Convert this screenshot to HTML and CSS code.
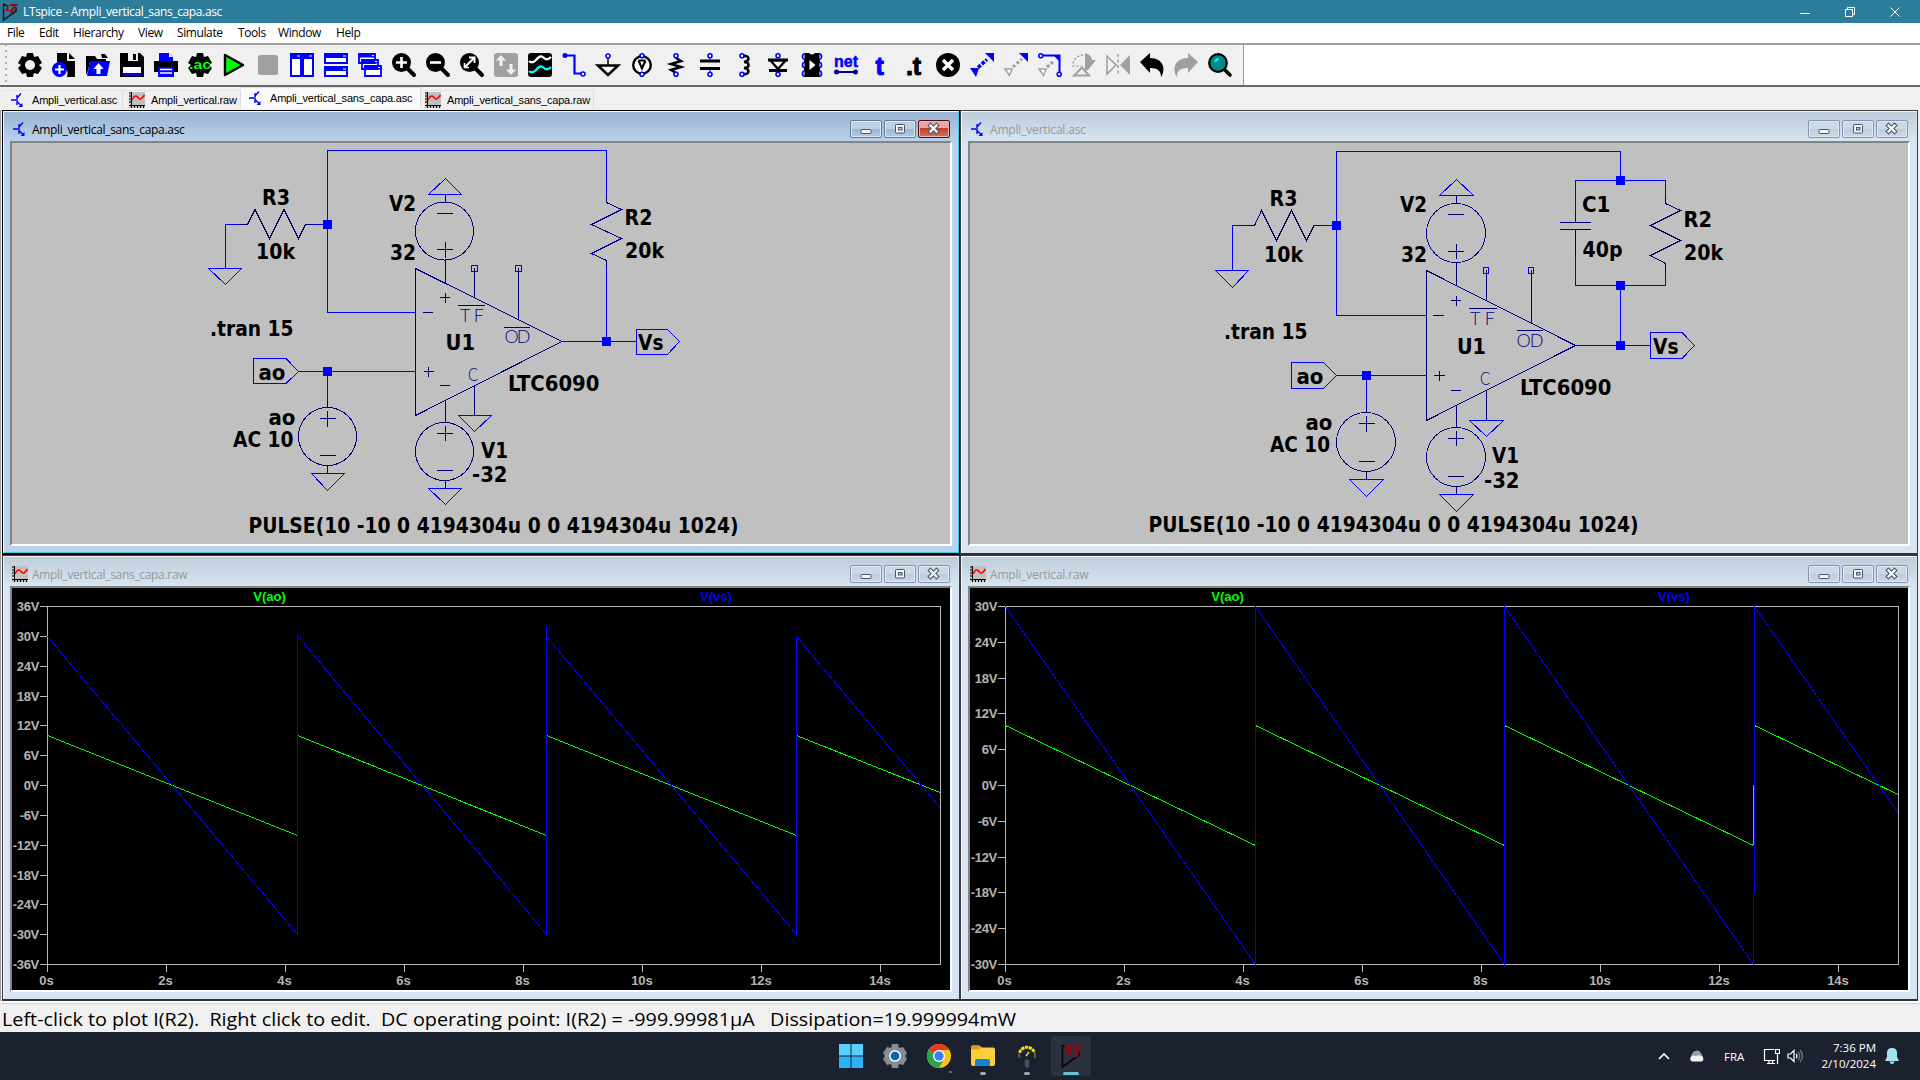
FILE: index.html
```html
<!DOCTYPE html>
<html lang="en">
<head>
<meta charset="utf-8">
<title>LTspice - Ampli_vertical_sans_capa.asc</title>
<link rel="stylesheet" href="styles.css">
</head>
<body>
<svg class="defs" width="0" height="0">
  <defs>
    <symbol id="i-sch" viewBox="0 0 16 16"><path d="M1 8h5M7 3v10M7 6l4-4.500M7 9.500l4 4" fill="none" stroke="#00f" stroke-width="1.400"/><path d="M8.500 15h4v-4z" fill="#00f"/></symbol>
    <symbol id="i-raw" viewBox="0 0 16 16"><path fill="#c0c0c0" d="M0 0h16v16H0z"/><path d="M2.500 0v16M0 13.500h16M0 1h2M0 4h2M0 7h2M0 10h2M5.500 13v3M8.500 13v3M11.500 13v3M14.500 13v3" stroke="#000" fill="none"/><path d="M3 8C6 2 8 4 9.500 6S13 7 15.500 3" stroke="#f00" stroke-width="1.600" fill="none"/></symbol>
    <symbol id="i-lt" viewBox="0 0 16 20"><path d="M1.500 2v16L14 9V5M1.500 2l4 2" fill="none" stroke="#14161c" stroke-width="1.500"/><path d="M3 3h4L6 8h3l3-5h2l-3.500 8H8l1-2H3.500L5 5z" fill="#8b0a14"/><path d="M8 2h8l-1 2H8z" fill="#8b0a14"/></symbol>
    <symbol id="c-min" viewBox="0 0 30 16"><rect x="10" y="8.500" width="10" height="4" rx=".8" fill="#f4f4f4" stroke="#4b5468"/></symbol>
    <symbol id="c-max" viewBox="0 0 30 16"><rect x="10.500" y="3.500" width="9" height="8.500" rx=".8" fill="#f4f4f4" stroke="#4b5468"/><rect x="13.500" y="6.500" width="3.500" height="2.500" fill="#b9c9dd" stroke="#4b5468"/></symbol>
    <symbol id="c-x" viewBox="0 0 30 16"><path d="M11.500 4.500l6 6m0-6l-6 6" stroke="#4b5468" stroke-width="4.500" stroke-linecap="square"/><path d="M11.500 4.500l6 6m0-6l-6 6" stroke="#f6f6f6" stroke-width="2.400" stroke-linecap="square"/></symbol>
  </defs>
</svg>

<header class="titlebar">
  <svg class="app-icon" width="16" height="20"><use href="#i-lt"/></svg>
  <span class="app-title">LTspice - Ampli_vertical_sans_capa.asc</span>
  <div class="sys">
    <svg width="12" height="12" viewBox="0 0 12 12"><path d="M1 7.500h10" stroke="#fff"/></svg>
    <svg width="12" height="12" viewBox="0 0 12 12"><path d="M1.500 3.500h7v7h-7zM3.500 3.500v-2h7v7h-2" fill="none" stroke="#fff"/></svg>
    <svg width="12" height="12" viewBox="0 0 12 12"><path d="M1.500 1.500l9 9m0-9l-9 9" stroke="#fff"/></svg>
  </div>
</header>

<nav class="menu"><span>File</span><span>Edit</span><span>Hierarchy</span><span>View</span><span>Simulate</span><span>Tools</span><span>Window</span><span>Help</span></nav>

<div class="toolrow">
  <div class="toolbar">
    <svg viewBox="0 0 24 24"><path fill-rule="evenodd" d="M9 0h6l1 4 4-1 4 7-3 2 3 3-4 6-4-1-1 4H9l-1-4-4 1-4-6 3-3-3-2 4-7 4 1zM12 7a5 5 0 1 0 .01 0z"/></svg>
    <svg viewBox="0 0 24 24"><path d="M5 0h10v8h8v16H15q3-11-10-15z"/><path d="M17 0l6 6h-6z"/><circle cx="7.500" cy="16.500" r="7.500" fill="#00f"/><path d="M7.500 12v9M3 16.500h9" stroke="#fff" stroke-width="2.200"/></svg>
    <svg viewBox="0 0 24 24"><path d="M0 3h9l2 3h9v3H4L1 21H0zM15 1h4l3 4h-6z"/><path d="M4 8h20l-3 15H1z" fill="#00f"/><path d="M12.500 10l5 6h-3v5h-4v-5h-3z" fill="#fff"/></svg>
    <svg viewBox="0 0 24 24"><path d="M0 0h20l4 4v20H0z"/><path d="M5 0h13v8H5z" fill="#f0f0f0"/><path d="M13 1h3v6h-3zM5 0h3v8H5z"/><path d="M3 14h18v6H3z" fill="#fff"/><path d="M3 20h18v3H3z" fill="#00f"/></svg>
    <svg viewBox="0 0 24 24"><path d="M5 0h10l4 4v4H5z" fill="#00f"/><path d="M15 0v4h4" fill="#fff"/><path d="M0 8h24v11h-4v-5H4v5H0z"/><path d="M4 14h16v10H4z" fill="#00f"/><path d="M6 16.500h12M6 20h12" stroke="#fff" stroke-width="1.600"/></svg>
    <svg viewBox="0 0 24 24"><path d="M9 0h6l1 4 4-1 4 7-3 2 3 3-4 6-4-1-1 4H9l-1-4-4 1-4-6 3-3-3-2 4-7 4 1z"/><text x="1" y="16" class="t-ac" textLength="22" lengthAdjust="spacingAndGlyphs">.ac</text></svg>
    <svg viewBox="0 0 24 24"><path d="M3 2l18 10L3 22z" fill="#0f0" stroke="#000" stroke-width="2.400" stroke-linejoin="round"/></svg>
    <svg viewBox="0 0 24 24"><rect x="2" y="2" width="20" height="20" rx="2.500" fill="#a0a0a0"/></svg>
    <svg viewBox="0 0 24 24"><path d="M1 1h10v22H1zM13 1h10v22H13zM1 5h10M13 5h10" fill="#fff" stroke="#00f" stroke-width="2"/><path d="M0 1h12v4H0zM12 1h12v4H12z" fill="#00f"/><path d="M7 3h3M19 3h3" stroke="#fff"/></svg>
    <svg viewBox="0 0 24 24"><path d="M1 1h22v9H1zM1 14h22v9H1z" fill="#fff" stroke="#00f" stroke-width="2"/><path d="M0 1h24v4H0zM0 14h24v4H0z" fill="#00f"/><path d="M19 3h3M19 16h3" stroke="#fff"/></svg>
    <svg viewBox="0 0 24 24"><g fill="#fff" stroke="#00f" stroke-width="1.800"><path d="M1 1h16v9H1zM4 7h16v9H4zM7 13h16v10H7z"/></g><path d="M0 1h18v3.500H0zM3 7h18v3.500H3zM6 13h18v3.500H6z" fill="#00f"/><path d="M14 2.500h2M17 8.500h2M20 14.500h2" stroke="#fff"/></svg>
    <svg viewBox="0 0 24 24"><path d="M15 15l7 7" stroke="#000" stroke-width="4" stroke-linecap="round"/><circle cx="9.500" cy="9.500" r="9.500"/><path d="M9.500 4v11M4 9.500h11" stroke="#fff" stroke-width="2.600"/></svg>
    <svg viewBox="0 0 24 24"><path d="M15 15l7 7" stroke="#000" stroke-width="4" stroke-linecap="round"/><circle cx="9.500" cy="9.500" r="9.500"/><path d="M4 9.500h11" stroke="#fff" stroke-width="2.600"/></svg>
    <svg viewBox="0 0 24 24"><path d="M15 15l7 7" stroke="#000" stroke-width="4" stroke-linecap="round"/><circle cx="9.500" cy="9.500" r="9.500"/><path d="M5 14l9-9M9 4.500h5.500V10" stroke="#fff" stroke-width="2" fill="none"/><path d="M4.500 10v4.500H9" stroke="#fff" stroke-width="1.600" fill="none"/></svg>
    <svg viewBox="0 0 24 24"><rect width="24" height="24" rx="3" fill="#a0a0a0"/><path d="M7 2l5 5.500H8.500V13h-3V7.500H2zM17 22l5-5.500h-3.500V11h-3v5.500H12z" fill="#f0f0f0"/></svg>
    <svg viewBox="0 0 24 24"><rect width="24" height="24" rx="3"/><path d="M1 8q3 3 7-1c4-5 6-4 8-2s4 2 7-1" fill="none" stroke="#fff" stroke-width="2.300"/><path d="M1 18q3 3 7-1c4-5 6-4 8-2s4 2 7-1" fill="none" stroke="#0ff" stroke-width="2.300"/></svg>
    <svg viewBox="0 0 24 24"><path d="M3 2.500h9.500v18H20" fill="none" stroke="#00f" stroke-width="2.200"/><circle cx="3" cy="2.500" r="2.500" fill="#00f"/><circle cx="21" cy="21" r="2" fill="#fff" stroke="#00f" stroke-width="1.600"/></svg>
    <svg viewBox="0 0 24 24"><path d="M12 5v7" stroke="#000" stroke-width="1.500"/><path d="M2 12.500h20L12 22z" fill="#fff" stroke="#000" stroke-width="2.600"/><circle cx="12" cy="3" r="2" fill="#fff" stroke="#00f" stroke-width="1.600"/></svg>
    <svg viewBox="0 0 24 24"><circle cx="12" cy="12" r="8.800" fill="#fff" stroke="#000" stroke-width="2.400"/><path d="M8.500 7.500l3.500 8 3.500-8M8.500 7.500h7" fill="none" stroke="#000" stroke-width="2.100"/><g fill="#fff" stroke="#00f" stroke-width="1.600"><circle cx="12" cy="2.800" r="2"/><circle cx="12" cy="21.200" r="2"/></g></svg>
    <svg viewBox="0 0 24 24"><path d="M12 5l5 3-10 3 10 3-10 3 5 3" fill="none" stroke="#000" stroke-width="2.500"/><g fill="#fff" stroke="#00f" stroke-width="1.600"><circle cx="12" cy="2.800" r="2"/><circle cx="12" cy="21.200" r="2"/></g></svg>
    <svg viewBox="0 0 24 24"><path d="M2 8h20M2 15.500h20" stroke="#000" stroke-width="3"/><path d="M12 4v3M12 17v3" stroke="#00f"/><g fill="#fff" stroke="#00f" stroke-width="1.600"><circle cx="12" cy="2.800" r="2"/><circle cx="12" cy="21.200" r="2"/></g></svg>
    <svg viewBox="0 0 24 24"><path d="M11 3c7-1 7 5 1 6 6 0 6 6 0 6 6 1 6 7-1 6" fill="none" stroke="#000" stroke-width="2.600"/><g fill="#fff" stroke="#00f" stroke-width="1.600"><circle cx="10" cy="2.800" r="2"/><circle cx="10" cy="21.200" r="2"/></g></svg>
    <svg viewBox="0 0 24 24"><path d="M2 7h20M3 17.500h18" stroke="#000" stroke-width="2.800"/><path d="M4.500 7.500h15L12 16z" fill="#fff" stroke="#000" stroke-width="2.400"/><g fill="#fff" stroke="#00f" stroke-width="1.600"><circle cx="12" cy="2.800" r="2"/><circle cx="12" cy="21.200" r="2"/></g></svg>
    <svg viewBox="0 0 24 24"><path d="M4 0h5q3 3 6 0h5v24H4z"/><path d="M9.500 7l6 5-6 5z" fill="#fff"/><g fill="#fff" stroke="#00f" stroke-width="1.700"><path d="M4.500 1a2 2.500 0 0 0 0 5M4.500 9.500a2 2.500 0 0 0 0 5M4.500 18a2 2.500 0 0 0 0 5M19.500 1a2 2.500 0 0 1 0 5M19.500 9.500a2 2.500 0 0 1 0 5M19.500 18a2 2.500 0 0 1 0 5"/></g></svg>
    <svg viewBox="0 0 24 24"><text x="0" y="13.500" class="t-net" textLength="24" lengthAdjust="spacingAndGlyphs">net</text><path d="M2 19h20" stroke="#000090" stroke-width="2"/><circle cx="2.500" cy="19" r="2.500" fill="#000090"/><circle cx="21.500" cy="19" r="2.500" fill="#000090"/></svg>
    <svg viewBox="0 0 24 24"><text x="7.500" y="22" class="t-t blue">t</text></svg>
    <svg viewBox="0 0 24 24"><text x="4" y="22" class="t-t" textLength="15">.t</text></svg>
    <svg viewBox="0 0 24 24"><circle cx="12" cy="12" r="12"/><path d="M7 7l10 10M17 7L7 17" stroke="#fff" stroke-width="3.400"/></svg>
    <svg viewBox="0 0 24 24"><path d="M15 0h9v9zM0 15h9l-3 9z" fill="#00f"/><path d="M8 14.500l9-8" stroke="#00f" stroke-width="3.600" stroke-dasharray="3.600 1.500"/></svg>
    <svg viewBox="0 0 24 24"><path d="M15 0h9v9z" fill="#00f"/><path d="M1 16h7l-2.500 6.500z" fill="#fff" stroke="#a0a0a0" stroke-width="1.500"/><path d="M9 14l9-8" stroke="#a0a0a0" stroke-width="3" stroke-dasharray="3 2"/></svg>
    <svg viewBox="0 0 24 24"><path d="M3 2.500h18.500V20" fill="none" stroke="#00f" stroke-width="2"/><path d="M15 2h7v7z" fill="#00f"/><g fill="#fff" stroke="#00f" stroke-width="1.600"><circle cx="2.800" cy="2.800" r="2"/><circle cx="21.200" cy="21.200" r="2"/></g><path d="M1 16h7l-2.500 6.500z" fill="#fff" stroke="#a0a0a0" stroke-width="1.500"/><path d="M9 14l7-6" stroke="#a0a0a0" stroke-width="3" stroke-dasharray="3 2"/></svg>
    <svg viewBox="0 0 24 24"><path d="M13 0c4 1 7 4 7 7h4l-8 10h-3z" fill="#a0a0a0"/><path d="M11 2Q1 3 1 13h8" fill="none" stroke="#a0a0a0" stroke-width="1.500" stroke-dasharray="2 2"/><path d="M2 22.500l8-8 7 8z" fill="#f0f0f0" stroke="#a0a0a0" stroke-width="2"/></svg>
    <svg viewBox="0 0 24 24"><path d="M1 3l9 9-9 9z" fill="#f0f0f0" stroke="#a0a0a0" stroke-width="1.600"/><path d="M24 2v20l-10-10z" fill="#a0a0a0"/><path d="M12 1v22" stroke="#a0a0a0" stroke-width="1.500" stroke-dasharray="3 2.500"/></svg>
    <svg viewBox="0 0 24 24"><path d="M0 9l10-9v5c14 0 16 12 11 19 0-6-3-9-11-9v5z"/></svg>
    <svg viewBox="0 0 24 24"><path d="M24 9L14 0v5C0 5-2 17 3 24c0-6 3-9 11-9v5z" fill="#a0a0a0"/></svg>
    <svg viewBox="0 0 24 24"><path d="M15 15l7 7" stroke="#000" stroke-width="3.600" stroke-linecap="round"/><circle cx="10" cy="10" r="8.800" fill="#008a8a" stroke="#000" stroke-width="2.200"/><path d="M6 9q1-4 5-4-1 4-5 4z" fill="#0ff"/></svg>
  </div>
</div>

<div class="tabs">
  <div class="tab"><svg width="16" height="16"><use href="#i-sch"/></svg><span>Ampli_vertical.asc</span></div>
  <div class="tab second"><svg width="16" height="16"><use href="#i-raw"/></svg><span>Ampli_vertical.raw</span></div>
  <div class="tab active"><svg width="16" height="16"><use href="#i-sch"/></svg><span>Ampli_vertical_sans_capa.asc</span></div>
  <div class="tab fourth"><svg width="16" height="16"><use href="#i-raw"/></svg><span>Ampli_vertical_sans_capa.raw</span></div>
</div>

<main class="mdi">
  <section class="win current">
    <div class="cap"><svg width="16" height="16"><use href="#i-sch"/></svg><span class="long">Ampli_vertical_sans_capa.asc</span>
      <div class="btns"><svg><use href="#c-min"/></svg><svg><use href="#c-max"/></svg><svg class="close"><use href="#c-x"/></svg></div></div>
    <svg class="client sch" viewBox="12 143 938 401" width="938" height="401">
      <g class="wire">
        <path d="M327.500 312.500V150.500H606.500V195M327.500 312.500H415.500M323 224.500H313M240 224.500H225.500V268.500M208.500 268.500H241.500L225.500 284.500ZM606.500 268V341.500M562 341.500H636.500M636.500 329.500H667.500L679.500 341.500L667.500 354.500H636.500ZM253.500 358.500H286L298.500 371.500L286 383.500H253.500ZM298.500 371.500H415.500M327.500 371V400"/>
        <path d="M445.500 178.500L461.500 194.500H428.500ZM311.500 473.500H344.500L327.500 490.500ZM428.500 488.500H461.500L445.500 504.500ZM458.500 415.500H491.500L474.500 431.500ZM471.500 265.500h6v6h-6zM515.500 265.500h6v6h-6z"/>
      </g>
      <g class="part">
        <path d="M313 224.500H305.500L298.500 238.500L284 209.500L269.500 238.500L255 209.500L247.500 224.500H240M606.500 195V202.500L621.500 209.500L591.500 224.500L621.500 238.500L591.500 253.500L606.500 260.500V268"/>
        <path d="M415.500 268.500V415.500L562 341.500ZM445.500 195V202M445.500 260V283M474.500 268V297.500M518.500 268V319M445.500 400.500V422M445.500 481V488M474.500 386V415M327.500 400V407M327.500 466V473"/>
        <circle cx="444.500" cy="231" r="29"/><circle cx="444.500" cy="451.500" r="29"/><circle cx="327.500" cy="436.500" r="29"/>
        <path d="M437 213.500h16M437 249.500h16M445.500 242v16M440 297.500h10M445.500 292.500v10M423 312.500h10M424 371.500h10M428.500 366.500v10M440 385.500h10M437 433.500h16M445.500 426v15M437 470.500h16M320 418.500h16M327.500 411v16M320 455.500h16M458 305.500h27M504 327.500h26"/>
      </g>
      <path class="node" d="M323 220h9v9h-9zM323 367h9v9h-9zM602 337h9v9h-9z"/>
      <g class="pin"><text x="460" y="321.500" textLength="24">TF</text><text x="504.500" y="342.500" textLength="26">OD</text><text x="468" y="380.500" textLength="10" lengthAdjust="spacingAndGlyphs">C</text></g>
      <g class="lbl">
        <text x="262" y="205" textLength="28" lengthAdjust="spacingAndGlyphs">R3</text>
        <text x="256" y="259" textLength="39" lengthAdjust="spacingAndGlyphs">10k</text>
        <text x="389" y="211" textLength="27" lengthAdjust="spacingAndGlyphs">V2</text>
        <text x="390" y="260" textLength="26" lengthAdjust="spacingAndGlyphs">32</text>
        <text x="624.500" y="225" textLength="28" lengthAdjust="spacingAndGlyphs">R2</text>
        <text x="625" y="258" textLength="39" lengthAdjust="spacingAndGlyphs">20k</text>
        <text x="210" y="336" textLength="83.500" lengthAdjust="spacingAndGlyphs">.tran 15</text>
        <text x="258.500" y="380" textLength="27" lengthAdjust="spacingAndGlyphs">ao</text>
        <text x="268.500" y="425" textLength="27" lengthAdjust="spacingAndGlyphs">ao</text>
        <text x="233" y="447" textLength="60.500" lengthAdjust="spacingAndGlyphs">AC 10</text>
        <text x="445.500" y="350" textLength="29.500" lengthAdjust="spacingAndGlyphs">U1</text>
        <text x="508" y="391" textLength="91.500" lengthAdjust="spacingAndGlyphs">LTC6090</text>
        <text x="481" y="458" textLength="27" lengthAdjust="spacingAndGlyphs">V1</text>
        <text x="472" y="482" textLength="35.500" lengthAdjust="spacingAndGlyphs">-32</text>
        <text x="638" y="350" textLength="25.500" lengthAdjust="spacingAndGlyphs">Vs</text>
        <text x="248.500" y="533" textLength="490" lengthAdjust="spacingAndGlyphs">PULSE(10 -10 0 4194304u 0 0 4194304u 1024)</text>
      </g>
    </svg>
  </section>

  <section class="win">
    <div class="cap"><svg width="16" height="16"><use href="#i-sch"/></svg><span>Ampli_vertical.asc</span>
      <div class="btns"><svg><use href="#c-min"/></svg><svg><use href="#c-max"/></svg><svg><use href="#c-x"/></svg></div></div>
    <svg class="client sch" viewBox="970 143 938 401" width="938" height="401">
      <g class="wire">
        <path d="M1336.500 315.500V151.500H1620.500V180.500M1336.500 315.500H1426.500M1336.500 225.500H1321M1247 225.500H1232.500V270.500M1215.500 270.500H1248.500L1232.500 287.500ZM1575.500 211V180.500H1665.500V196M1575.500 256V285.500H1665.500V271M1620.500 285.500V345.500M1575.500 345.500H1650.500M1650.500 332.500H1682L1694.500 345.500L1682 358.500H1650.500ZM1291.500 362.500H1323.500L1336.500 375.500L1323.500 388.500H1291.500ZM1336.500 375.500H1426.500M1366.500 375V405"/>
        <path d="M1456.500 179.500L1473.500 195.500H1439.500ZM1349.500 479.500H1383.500L1366.500 496.500ZM1439.500 494.500H1473.500L1456.500 511.500ZM1469.500 420.500H1503.500L1486.500 436.500ZM1483.500 267.500h5v6h-5zM1528.500 267.500h5v6h-5z"/>
      </g>
      <g class="part">
        <path d="M1321 225.500H1314L1306.500 240.500L1291.500 210.500L1276.500 240.500L1261.500 210.500L1254.500 225.500H1247M1665.500 196V203.500L1680.500 210.500L1650.500 225.500L1680.500 240.500L1650.500 255.500L1665.500 263.500V271M1575.500 211V222.500M1575.500 229.500V256M1560 222.500H1591M1560 229.500H1591"/>
        <path d="M1426.500 270.500V420.500L1575.500 345.500ZM1456.500 196V203M1456.500 263V286M1486.500 270V300.500M1531.500 270V323M1456.500 405.500V427M1456.500 487V494M1486.500 390V420M1366.500 405V412M1366.500 472V479"/>
        <circle cx="1456" cy="233" r="29.500"/><circle cx="1456" cy="457" r="29.500"/><circle cx="1366" cy="442" r="29.500"/>
        <path d="M1448 214.500h16M1448 251.500h16M1456.500 244v15M1451 300.500h10M1456.500 295.500v10M1433 315.500h11M1434 375.500h11M1439.500 370.500v10M1451 390.500h10M1448 438.500h16M1456.500 431v15M1448 476.500h16M1359 423.500h16M1366.500 416v16M1359 461.500h16M1469 308.500h28M1517 330.500h26"/>
      </g>
      <path class="node" d="M1332 221h9v9h-9zM1616 176h9v9h-9zM1616 281h9v9h-9zM1616 341h9v9h-9zM1362 371h9v9h-9z"/>
      <g class="pin"><text x="1470" y="324.500" textLength="25">TF</text><text x="1516.500" y="346.500" textLength="27">OD</text><text x="1480" y="384.500" textLength="10" lengthAdjust="spacingAndGlyphs">C</text></g>
      <g class="lbl">
        <text x="1269.500" y="206" textLength="28" lengthAdjust="spacingAndGlyphs">R3</text>
        <text x="1264" y="262" textLength="39" lengthAdjust="spacingAndGlyphs">10k</text>
        <text x="1400" y="212" textLength="27" lengthAdjust="spacingAndGlyphs">V2</text>
        <text x="1401" y="262" textLength="26" lengthAdjust="spacingAndGlyphs">32</text>
        <text x="1582" y="212" textLength="28.500" lengthAdjust="spacingAndGlyphs">C1</text>
        <text x="1582.500" y="257" textLength="40" lengthAdjust="spacingAndGlyphs">40p</text>
        <text x="1683.500" y="227" textLength="28.500" lengthAdjust="spacingAndGlyphs">R2</text>
        <text x="1684" y="260" textLength="39" lengthAdjust="spacingAndGlyphs">20k</text>
        <text x="1224" y="339" textLength="83.500" lengthAdjust="spacingAndGlyphs">.tran 15</text>
        <text x="1296.500" y="384" textLength="27" lengthAdjust="spacingAndGlyphs">ao</text>
        <text x="1305.500" y="430" textLength="27" lengthAdjust="spacingAndGlyphs">ao</text>
        <text x="1270" y="452" textLength="60" lengthAdjust="spacingAndGlyphs">AC 10</text>
        <text x="1457" y="354" textLength="29" lengthAdjust="spacingAndGlyphs">U1</text>
        <text x="1520" y="395" textLength="91.500" lengthAdjust="spacingAndGlyphs">LTC6090</text>
        <text x="1492" y="463" textLength="27" lengthAdjust="spacingAndGlyphs">V1</text>
        <text x="1484" y="488" textLength="35.500" lengthAdjust="spacingAndGlyphs">-32</text>
        <text x="1653" y="354" textLength="25.500" lengthAdjust="spacingAndGlyphs">Vs</text>
        <text x="1148.500" y="532" textLength="490" lengthAdjust="spacingAndGlyphs">PULSE(10 -10 0 4194304u 0 0 4194304u 1024)</text>
      </g>
    </svg>
  </section>

  <section class="win">
    <div class="cap"><svg width="16" height="16"><use href="#i-raw"/></svg><span class="long">Ampli_vertical_sans_capa.raw</span>
      <div class="btns"><svg><use href="#c-min"/></svg><svg><use href="#c-max"/></svg><svg><use href="#c-x"/></svg></div></div>
    <svg class="client plot" viewBox="12 588 938 402" width="938" height="402">
      <path class="axis" d="M47.500 606.500H940.500V964.500H47.500ZM40 606.500h7M40 636.500h7M40 666.500h7M40 696.500h7M40 725.500h7M40 755.500h7M40 785.500h7M40 815.500h7M40 845.500h7M40 875.500h7M40 904.500h7M40 934.500h7M40 964.500h7M47.500 964v8M166.500 964v8M285.500 964v8M404.500 964v8M523.500 964v8M642.500 964v8M761.500 964v8M880.500 964v8"/>
      <path class="g" d="M47.500 735.500L297.500 835.500M297.500 735.500L546.500 835.500M546.500 735.500L796.500 835.500M796.500 735.500L940 792.500"/>
      <path class="b" d="M47.500 636.500L297.500 934.500V635.500L546.500 934.500V626V636.500L796.500 934.500V636.500L940 807.500"/>
      <g class="yl"><text x="39" y="611">36V</text><text x="39" y="641">30V</text><text x="39" y="671">24V</text><text x="39" y="701">18V</text><text x="39" y="730">12V</text><text x="39" y="760">6V</text><text x="39" y="790">0V</text><text x="39" y="820">-6V</text><text x="39" y="850">-12V</text><text x="39" y="880">-18V</text><text x="39" y="909">-24V</text><text x="39" y="939">-30V</text><text x="39" y="969">-36V</text></g>
      <g class="xl"><text x="46.500" y="985">0s</text><text x="165.500" y="985">2s</text><text x="284.500" y="985">4s</text><text x="403.500" y="985">6s</text><text x="522.500" y="985">8s</text><text x="642" y="985">10s</text><text x="761" y="985">12s</text><text x="880" y="985">14s</text></g>
      <g class="tr"><text class="vg" x="269.500" y="601">V(ao)</text><text class="vb" x="716" y="601">V(vs)</text></g>
    </svg>
  </section>

  <section class="win">
    <div class="cap"><svg width="16" height="16"><use href="#i-raw"/></svg><span>Ampli_vertical.raw</span>
      <div class="btns"><svg><use href="#c-min"/></svg><svg><use href="#c-max"/></svg><svg><use href="#c-x"/></svg></div></div>
    <svg class="client plot" viewBox="970 588 938 402" width="938" height="402">
      <path class="axis" d="M1005.500 606.500H1898.500V964.500H1005.500ZM998 606.500h7M998 642.500h7M998 678.500h7M998 713.500h7M998 749.500h7M998 785.500h7M998 821.500h7M998 857.500h7M998 892.500h7M998 928.500h7M998 964.500h7M1005.500 964v8M1124.500 964v8M1243.500 964v8M1362.500 964v8M1481.500 964v8M1600.500 964v8M1719.500 964v8M1838.500 964v8"/>
      <path class="g" d="M1005.500 725.500L1255.500 845.500M1255.500 725.500L1504.500 845.500M1504.500 725.500L1753.500 845.500M1754.500 725.500L1898 794.500"/>
      <path class="b" d="M1005.500 606.500L1255.500 964.500V606.500L1504.500 964.500V606.500L1753.500 964.500V893M1754.500 893V606.500L1898 812.500"/>
      <path class="g" d="M1753.500 845V785"/>
      <g class="yl"><text x="997" y="611">30V</text><text x="997" y="647">24V</text><text x="997" y="683">18V</text><text x="997" y="718">12V</text><text x="997" y="754">6V</text><text x="997" y="790">0V</text><text x="997" y="826">-6V</text><text x="997" y="862">-12V</text><text x="997" y="897">-18V</text><text x="997" y="933">-24V</text><text x="997" y="969">-30V</text></g>
      <g class="xl"><text x="1004.500" y="985">0s</text><text x="1123.500" y="985">2s</text><text x="1242.500" y="985">4s</text><text x="1361.500" y="985">6s</text><text x="1480.500" y="985">8s</text><text x="1600" y="985">10s</text><text x="1719" y="985">12s</text><text x="1838" y="985">14s</text></g>
      <g class="tr"><text class="vg" x="1227.500" y="601">V(ao)</text><text class="vb" x="1674" y="601">V(vs)</text></g>
    </svg>
  </section>
</main>

<div class="status"><svg width="1030" height="28"><text x="0" y="22.500" textLength="1014" lengthAdjust="spacingAndGlyphs">Left-click to plot I(R2).&nbsp; Right click to edit.&nbsp; DC operating point: I(R2) = -999.99981µA&nbsp;&nbsp; Dissipation=19.999994mW</text></svg></div>

<footer class="taskbar">
  <div class="apps">
    <div class="app"><svg width="24" height="24" viewBox="0 0 24 24"><path fill="#5bcefb" d="M0 0h11.500v11.500H0zM12.500 0H24v11.500H12.500z"/><path fill="#2bb1f6" d="M0 12.500h11.500V24H0zM12.500 12.500H24V24H12.500z"/></svg></div>
    <div class="app"><svg width="24" height="24" viewBox="0 0 24 24"><path d="M9 0h6l1 4 4-1 4 6-2 3 2 3-4 6-4-1-1 4H9l-1-4-4 1-4-6 2-3-2-3 4-6 4 1z" fill="#868d95"/><circle cx="12" cy="12" r="6" fill="#e8eef4"/><circle cx="12" cy="12" r="4.300" fill="#0a63b5"/></svg></div>
    <div class="app"><svg width="24" height="24" viewBox="0 0 24 24"><circle cx="12" cy="12" r="12" fill="#fbc116"/><path d="M12 12L1.600 6A12 12 0 0 0 12 24l5-9z" fill="#2ba24c"/><path d="M1.600 6A12 12 0 0 1 22.400 6H12v6z" fill="#e33b2e"/><circle cx="12" cy="12" r="6" fill="#fff"/><circle cx="12" cy="12" r="4.700" fill="#3b7ded"/></svg><i class="faint"></i></div>
    <div class="app"><svg width="24" height="24" viewBox="0 0 24 24"><path d="M0 3q0-1.500 2-1.500h6l3 2h11q2 0 2 2V20q0 2-2 2H2q-2 0-2-2z" fill="#ffce3d"/><path d="M0 3q0-1.500 2-1.500h6l2 2-2 2H0z" fill="#dd9b12"/><path d="M4 22v-5q0-2 2-2h11q2 0 2 2v5z" fill="#1583d6"/></svg><i></i></div>
    <div class="app"><svg width="24" height="24" viewBox="0 0 24 24"><path d="M4.500 14a8 8 0 1 1 15 0" fill="none" stroke="#6a6b30" stroke-width="1.500"/><path d="M4.500 8.500a8 8 0 0 1 15 0" fill="none" stroke="#f2dc10" stroke-width="3" stroke-dasharray="3 .8"/><path d="M11 12l3-4" stroke="#e6d840" stroke-width="1.500"/><path d="M12 17.500v4" stroke="#4b4f59" stroke-width="4.500" stroke-linecap="round"/></svg><i></i></div>
    <div class="app on"><svg width="24" height="26" viewBox="0 0 24 26"><path d="M3.500 2v22L20 12V7M3.500 2l5 3" fill="none" stroke="#07080c" stroke-width="1.800"/><path d="M5 3h9l-2.500 8h4l5-8h2l-4 11h-3l1-2.500H6l3-6H6z" fill="#8b0a14"/><path d="M13 2.500h10l-1 2h-9z" fill="#8b0a14"/></svg><i></i></div>
  </div>
  <div class="tray">
    <svg class="chev" width="12" height="8" viewBox="0 0 12 8"><path d="M1 7l5-5 5 5" fill="none" stroke="#fff" stroke-width="1.600"/></svg>
    <svg class="cloud" width="16" height="12" viewBox="0 0 16 12"><path d="M3 8a3 3 0 0 1 0-4 5 5 0 0 1 9-1l2 4z" fill="#9b9fa6"/><path d="M3 11.500a3 3 0 0 1 0-5.500q2-1 4 .3 2-1.800 5-.3a3 3 0 0 1 1 5.500z" fill="#f4f4f4"/></svg>
    <span class="fra">FRA</span>
    <svg class="net" width="17" height="17" viewBox="0 0 17 17"><path d="M11 1.500H1.500v11H12M4 15.500h8M6 13v2M9.500 13v2M12.500 1.500h4v4h-4zM14.500 6v10" fill="none" stroke="#fff" stroke-width="1.200"/></svg>
    <svg class="vol" width="17" height="14" viewBox="0 0 17 14"><path d="M1 5v4h2.500L7 12.500v-11L3.500 5zM9 5q2 2 0 4" fill="none" stroke="#fff" stroke-width="1.200"/><path d="M11 3q3.500 4 0 8M13 1q5 6 0 12" fill="none" stroke="#777c87" stroke-width="1.200"/></svg>
    <div class="clock"><span>7:36 PM</span><span>2/10/2024</span></div>
    <svg class="bell" width="14" height="16" viewBox="0 0 14 16"><path d="M7 0q5 0 5 5v4l2 4H0l2-4V5q0-5 5-5zM4.500 13.500h5Q9 16 7 16t-2.500-2.500z" fill="#a4e6ee"/></svg>
  </div>
</footer>
</body>
</html>
```
FILE: styles.css
```css
* { box-sizing: border-box; }
body { margin: 0; width: 1920px; height: 1080px; overflow: hidden; display: flex; flex-direction: column; background: #f0f0f0; color: #000; font: 12px "Open Sans", "Noto Sans", sans-serif; }
svg { display: block; flex: none; }
span { white-space: pre; }
.defs { display: none; }

.titlebar { height: 23px; flex: none; background: #2d7d9a; color: #fff; display: flex; align-items: center; padding-left: 2px; }
.app-title { margin-left: 5px; letter-spacing: -0.37px; }
.sys { margin-left: auto; display: flex; gap: 33px; padding-right: 19px; }

.menu { height: 20px; flex: none; background: #fff; display: grid; grid-template-columns: 32px 34px 65px 39px 61px 40px 58px 40px; padding-left: 7px; line-height: 20px; letter-spacing: -0.4px; }

.toolrow { height: 44px; flex: none; background: #fff; border-top: 2px solid #a0a0a0; border-bottom: 2px solid #696969; display: flex; }
.toolbar { width: 1244px; background: #f0f0f0; border-right: 1px solid #a0a0a0; display: flex; gap: 10px; align-items: center; padding-left: 18px; background-image: radial-gradient(circle, #b0b0b0 1px, transparent 1.3px); background-size: 6px 6px; background-position: 3px 3px; background-repeat: repeat-y; }
.toolbar svg { width: 24px; height: 24px; overflow: visible; }
.t-ac { font: bold 13px "Liberation Sans", sans-serif; fill: #0f0; }
.t-net { font: bold 17px "Liberation Sans", sans-serif; fill: #00f; stroke: #00f; stroke-width: .5; }
.t-t { font: bold 25px "Liberation Sans", sans-serif; stroke: #000; }
.t-t.blue { fill: #00f; stroke: #00f; }

.tabs { height: 23px; flex: none; display: flex; padding-left: 3px; align-items: flex-end; font: 11px/18px "Liberation Sans", sans-serif; letter-spacing: -0.2px; }
.tab { display: flex; align-items: center; height: 19px; width: 120px; padding-left: 7px; gap: 6px; border-right: 1px solid #dcdcdc; border-top: 1px solid #e3e3e3; margin-bottom: 1px; }
.tab.second { width: 118px; padding-left: 6px; }
.tab.active { width: 180px; height: 22px; padding-left: 7px; padding-bottom: 2px; background: #fafafa; }
.tab.fourth { width: 173px; padding-left: 4px; }

.mdi { height: 891px; flex: none; display: grid; grid-template-columns: 958px 958px; grid-template-rows: 445px 446px; padding-left: 2px; background: #f0f0f0; box-shadow: inset 1px 0 #a0a0a0; }
.win { border: 1px solid #3c3c40; border-bottom-width: 2px; border-bottom-color: #303436; background: #d7e4f2; padding: 0 7px 7px; box-shadow: inset 1px 1px #f4f8fc; }
.win .cap { height: 30px; margin: 0 -6px; padding: 5px 8px 0; display: flex; align-items: center; background: linear-gradient(#f4f8fc 1px, #bfcddb 1px, #d7e4f2); color: #999; letter-spacing: -0.18px; }
.win.current { background: #b9d1ea; box-shadow: inset 1px 1px #f4f8fc, inset -1px -1px #37d0ee; border-color: #000; }
.win.current .cap { background: linear-gradient(#f4f8fc 1px, #99b4d1 1px, #b9d1ea); color: #000; }
.cap > svg { margin-right: 4px; }
.cap > span { padding-top: 1px; }
.cap > .long { letter-spacing: -0.32px; }
.btns { margin-left: auto; display: flex; gap: 2px; }
.btns svg { width: 32px; height: 18px; border: 1px solid #8496b4; border-radius: 2px; background: linear-gradient(#cbd8e6 50%, #bccbdc 50%, #ccdae9); box-shadow: inset 0 0 0 1px #dfe9f3; }
.current .btns svg { border-color: #647a9a; background: linear-gradient(#bccfe4 50%, #9cb4d0 50%, #b5cce6); }
.current .btns .close { border-color: #4c1018; background: linear-gradient(#e8a79c 45%, #c0402a 46%, #d5715a); box-shadow: inset 0 0 0 1px #e9b3aa; }
.client { box-sizing: content-box; border: 2px solid; border-color: #848484 #fff #fff #848484; }

.sch { background: #c0c0c0; }
.wire, .part { fill: none; stroke: #00f; stroke-width: 1; shape-rendering: crispEdges; }
.part { stroke: #00007f; }
.node { fill: #00f; }
.lbl { font: bold 20.5px "DejaVu Sans Condensed", "DejaVu Sans", sans-serif; font-stretch: condensed; }
.pin { font: 300 18px Lato, sans-serif; fill: #00007f; }

.plot { background: #000; font: bold 13px "Liberation Sans", sans-serif; }
.axis, .g, .b { fill: none; stroke: #b8b8b8; shape-rendering: crispEdges; }
.g { stroke: #0f0; }
.b { stroke: #00f; }
.yl { fill: #b4b4b4; text-anchor: end; letter-spacing: -0.3px; }
.xl { fill: #b4b4b4; text-anchor: middle; }
.tr { text-anchor: middle; }
.vg { fill: #0f0; }
.vb { fill: #00f; }

.status { height: 31px; flex: none; border-top: 2px solid #fff; background: #f0f0f0; box-shadow: inset 0 1px #d4d4d4; padding-left: 2px; }
.status svg { font-size: 17.5px; }

.taskbar { height: 48px; flex: none; background: #1c2130; display: flex; color: #fff; }
.apps { display: flex; gap: 4px; margin-left: 831px; align-items: center; }
.app { width: 40px; height: 40px; display: flex; align-items: center; justify-content: center; position: relative; border-radius: 4px; }
.app i { position: absolute; width: 6px; height: 3px; left: 17px; bottom: 1px; border-radius: 2px; background: #a0a4ab; }
.app i.faint { width: 3px; height: 2px; left: 30px; bottom: 3px; background: #6d727c; }
.app.on { background: #2c3140; }
.app.on i { width: 16px; left: 12px; background: #62c5d6; }
.tray { margin-left: auto; display: flex; align-items: center; padding-right: 21px; }
.chev { margin-right: 19px; }
.cloud { margin-right: 19px; }
.fra { width: 22px; margin-right: 17px; font-size: 11.5px; }
.net { margin-right: 7px; }
.vol { margin-right: 17px; }
.clock { display: flex; flex-direction: column; align-items: flex-end; width: 55px; margin-right: 9px; line-height: 16px; font-size: 11.5px; }
```
